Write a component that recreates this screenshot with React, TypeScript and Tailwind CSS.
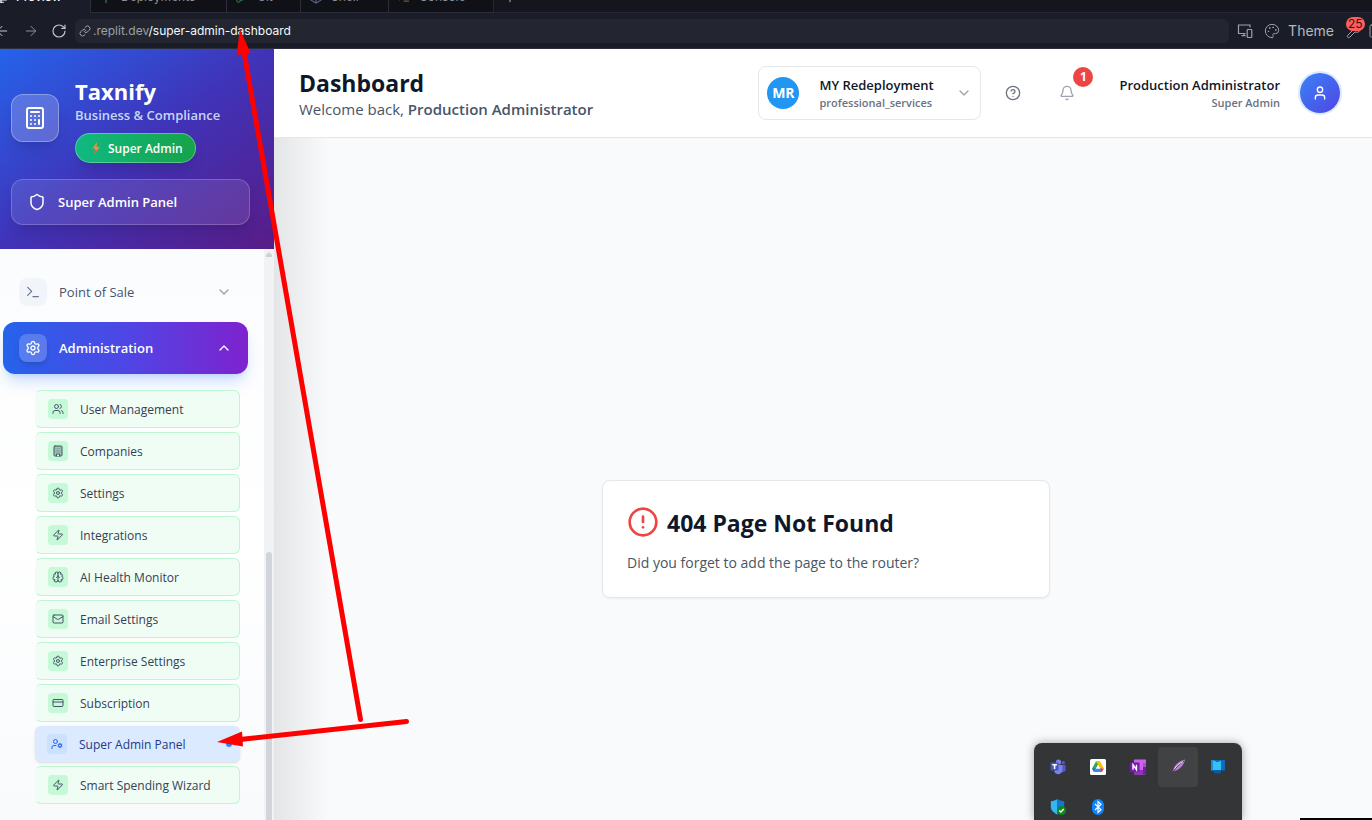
import React from "react";
import {
  ArrowLeft, ArrowRight, RotateCw, Link as LinkIcon, Palette, Wrench, Calculator, Shield,
  Terminal, Settings, ChevronUp, ChevronDown, Users, Zap, Brain, Mail, CreditCard, UserCog,
  CircleHelp, Bell, User, CircleAlert, Monitor, Plus, GitBranch, Box, PanelRight,
} from "lucide-react";

type IconType = React.ComponentType<{ className?: string; strokeWidth?: number }>;

const ui = "font-['Open_Sans','Noto_Sans',sans-serif]";

function Sprout({ className }: { className?: string }) {
  return (
    <svg viewBox="0 0 14 14" className={className} fill="none" stroke="currentColor" strokeWidth="1.5">
      <path d="M7 13 V4 M7 9 H3 V5 M7 8 H11 V5" />
    </svg>
  );
}

function Devices({ className }: { className?: string }) {
  return (
    <svg viewBox="0 0 16 16" className={className} fill="none" stroke="currentColor" strokeWidth="1.2">
      <path d="M13 4.5 V2 H1.5 V10.5 H8.5 M4.5 12.7 H8.5 M7 10.5 V12.7" />
      <rect x="10.2" y="6.5" width="4.6" height="8" rx="0.8" />
    </svg>
  );
}

function Office({ className }: { className?: string }) {
  return (
    <svg viewBox="0 0 24 24" className={className} stroke="currentColor" strokeWidth="2" strokeLinecap="round">
      <rect x="4" y="2" width="16" height="20" rx="2" fill="#9cc4b2" />
      <path d="M9 22 V18 H15 V22" fill="#dcfce7" />
      <path d="M8 7 H16 M8 11 H16 M8 14 H16" strokeOpacity="0.25" />
    </svg>
  );
}

const tabs: { label: string; width: string; icon: IconType; tint: string }[] = [
  { label: "Deployments", width: "w-[136px]", icon: Sprout, tint: "text-[#2f6b45]" },
  { label: "Git", width: "w-[74px]", icon: GitBranch, tint: "text-[#2f6b45]" },
  { label: "Shell", width: "w-[88px]", icon: Box, tint: "text-[#56677f]" },
  { label: "Console", width: "w-[105px]", icon: Terminal, tint: "text-[#6b5a3a]" },
];

function BrowserChrome() {
  return (
    <div className="shrink-0 bg-[#1a1d27] font-['Inter',sans-serif]">
      <div className="flex h-[13px] items-end overflow-hidden bg-[#14151d] text-xs leading-5">
        <button className="flex h-7 w-[90px] shrink-0 items-center gap-2 overflow-hidden bg-[#1a1d27] pb-1 font-medium text-[#f5f9fc]">
          <Monitor className="-ml-1.5 size-3.5 shrink-0" />
          Preview
        </button>
        {tabs.map(({ label, width, icon: Icon, tint }) => (
          <button
            key={label}
            className={`flex h-7 shrink-0 items-center gap-2 border-b border-l border-[#2b2e3a] bg-[#101116] pb-1 pl-2 text-[#8a8f98] ${width}`}
          >
            <Icon className={`size-3.5 ${tint}`} />
            {label}
          </button>
        ))}
        <div className="flex h-7 grow items-center border-b border-l border-[#232634] pb-1 pl-2 text-[#8a8f98]">
          <Plus className="size-4" />
        </div>
      </div>
      <div className="flex h-9 items-center overflow-hidden border-b border-[#2b2e3c] text-[#c2c8cc]">
        <button aria-label="Back" className="-ml-1.5 w-[29px] shrink-0"><ArrowLeft className="size-4" strokeWidth={1.5} /></button>
        <button aria-label="Forward" className="w-7 shrink-0 text-[#8a8f98]"><ArrowRight className="size-4" strokeWidth={1.5} /></button>
        <button aria-label="Reload" className="w-6 shrink-0"><RotateCw className="size-4" strokeWidth={1.75} /></button>
        <div className="flex h-6 grow items-center gap-0.5 rounded-md bg-[#232630] pl-1 text-xs text-[#9da2a6]">
          <LinkIcon className="size-3" strokeWidth={2} />
          <span>.replit.dev<span className="text-[#f5f9fc]">/super-admin-dashboard</span></span>
        </div>
        <div className="flex shrink-0 items-center pl-2 text-[#9da2a6]">
          <Devices className="mr-[11px] size-4" />
          <Palette className="mr-2 size-4" strokeWidth={1.5} />
          <span className="mr-3 text-sm text-[#b4b9be]">Theme</span>
          <div className="relative">
            <Wrench className="size-4" strokeWidth={1.5} />
            <span className="absolute -top-1.5 left-0 rounded-full bg-[#ff5f5c] px-0.5 text-xs leading-[14px] text-[#3a1010]">25</span>
          </div>
          <PanelRight className="-mr-3 ml-1.5 size-4" strokeWidth={1.5} />
        </div>
      </div>
    </div>
  );
}

function Bolt() {
  return (
    <svg viewBox="0 0 8 12" className="h-3 w-2">
      <path d="M5 0 L0.5 6.6 H3 L2.6 12 L7.6 4.9 H4.6 Z" fill="#fb8b3c" />
      <path d="M2.9 8 L2.6 12 L5.4 8 Z" fill="#f4564a" />
    </svg>
  );
}

function SidebarHeader() {
  return (
    <div className="h-[200px] shrink-0 bg-linear-to-br/srgb from-[#2563eb] via-[#4033b8] to-[#581c87] pt-7 pr-6 pl-[11px]">
      <div className="flex items-center gap-4">
        <div className="mb-1 flex size-12 shrink-0 items-center justify-center rounded-xl border border-white/30 bg-white/20 shadow-lg">
          <Calculator className="size-6 text-white" />
        </div>
        <div className="flex flex-col items-start">
          <h1 className="text-[22px] leading-7 font-bold text-white">Taxnify</h1>
          <p className="text-[13px] leading-5 font-semibold text-[#dbeafe]/90">Business &amp; Compliance</p>
          <span className="mt-2 flex h-[30px] items-center gap-2 rounded-full border border-white/30 bg-linear-to-r/srgb from-[#10b981] to-[#16a34a] pr-3 pl-4 text-xs font-semibold text-white shadow-lg">
            <Bolt />
            <span className="pt-0.5">Super Admin</span>
          </span>
        </div>
      </div>
      <a
        href="#admin"
        className="mt-4 flex h-[46px] items-center gap-3 rounded-xl border border-white/20 bg-white/10 px-4 text-[13px] font-semibold text-white shadow-lg"
      >
        <Shield className="size-[18px]" />
        <span className="pt-0.5">Super Admin Panel</span>
      </a>
    </div>
  );
}

const items: { label: string; icon: IconType; active?: boolean }[] = [
  { label: "User Management", icon: Users },
  { label: "Companies", icon: Office },
  { label: "Settings", icon: Settings },
  { label: "Integrations", icon: Zap },
  { label: "AI Health Monitor", icon: Brain },
  { label: "Email Settings", icon: Mail },
  { label: "Enterprise Settings", icon: Settings },
  { label: "Subscription", icon: CreditCard },
  { label: "Super Admin Panel", icon: UserCog, active: true },
  { label: "Smart Spending Wizard", icon: Zap },
];

function Sidebar() {
  return (
    <aside className="flex w-[274px] shrink-0 flex-col bg-white">
      <SidebarHeader />
      <div className="flex min-h-0 grow">
        <nav className="min-w-0 grow overflow-hidden bg-linear-to-b from-[#fbfcfe] via-white to-[#f8fafc] pt-[17px] pr-4 pl-[3px]">
          <button className="flex h-[52px] w-full items-center rounded-xl px-4 text-[13px] font-medium text-[#475569]">
            <span className="flex size-7 items-center justify-center rounded-lg bg-[#f1f5f9] text-[#64748b]">
              <Terminal className="size-4" strokeWidth={1.75} />
            </span>
            <span className="ml-3 grow pt-0.5 text-left">Point of Sale</span>
            <ChevronDown className="size-4 text-[#94a3b8]" />
          </button>
          <button className="mt-1 flex h-[52px] w-full items-center rounded-xl bg-linear-to-r/srgb from-[#2563eb] via-[#4f46e5] to-[#7e22ce] px-4 text-[13px] font-semibold text-white shadow-lg shadow-[#3b82f6]/25">
            <span className="flex size-7 items-center justify-center rounded-lg bg-white/20 shadow-md">
              <Settings className="size-4" />
            </span>
            <span className="ml-3 grow pt-0.5 text-left">Administration</span>
            <ChevronUp className="size-4" />
          </button>
          <ul className="mt-4 mr-2 ml-8 flex flex-col gap-1 text-xs font-medium">
            {items.map(({ label, icon: Icon, active }) => (
              <li key={label}>
                <a
                  href="#page"
                  className={
                    active
                      ? "flex h-9 items-center rounded-md bg-[#dbeafe] px-3 text-[#1e3a8a] shadow-sm"
                      : "flex h-[38px] items-center rounded-md border border-[#bbf7d0] border-l-transparent bg-[#f0fdf4] px-3 text-[#334155]"
                  }
                >
                  <span
                    className={
                      active
                        ? "flex size-5 items-center justify-center rounded bg-[#bfdbfe]/60 text-[#2563eb]"
                        : "flex size-5 items-center justify-center rounded bg-[#bbf7d0]/80 text-[#475569]"
                    }
                  >
                    <Icon className="size-3" strokeWidth={2} />
                  </span>
                  <span className="ml-3 grow pt-0.5">{label}</span>
                  {active && <span className="-mr-1 size-1.5 rounded-full bg-[#3b82f6]" />}
                </a>
              </li>
            ))}
          </ul>
        </nav>
        <div className="flex w-2.5 shrink-0 flex-col items-center bg-[#f1f2f4]">
          <svg viewBox="0 0 6 5" className="mt-[3px] h-[5px] w-1.5 shrink-0"><path d="M3 0 L6 3 V5 H0 V3 Z" fill="#cfd1d8" /></svg>
          <div className="mt-[295px] w-1.5 grow rounded-t-full bg-[#d1d5db]" />
        </div>
      </div>
    </aside>
  );
}

function Header() {
  return (
    <header className="flex h-[89px] shrink-0 items-center border-b border-[#e5e7eb] bg-white pr-8 pl-[25px] shadow-xs">
      <div className="grow">
        <h2 className="text-[23px] leading-8 font-bold text-[#0f172a]">Dashboard</h2>
        <p className="text-[15px] leading-5 text-[#475569]">
          Welcome back, <span className="font-semibold">Production Administrator</span>
        </p>
      </div>
      <button className="flex h-[54px] w-[223px] items-center rounded-lg border border-[#e5e7eb] bg-white px-2 text-left">
        <span className="flex size-8 shrink-0 items-center justify-center rounded-full bg-[#2196f3] text-sm font-bold text-white">MR</span>
        <span className="ml-5 grow">
          <span className="block text-[13px] leading-5 font-semibold text-[#0f172a]">MY Redeployment</span>
          <span className="block text-[11px] leading-4 font-semibold text-[#6b7280]">professional_services</span>
        </span>
        <ChevronDown className="size-4 text-[#9ca3af]" />
      </button>
      <button aria-label="Help" className="ml-6 text-[#6b7280]"><CircleHelp className="size-4" /></button>
      <button aria-label="Notifications" className="relative ml-[38px] text-[#9ca3af]">
        <Bell className="size-4" />
        <span className="absolute -top-[18px] left-[14px] flex size-5 items-center justify-center rounded-full bg-[#ef4444] text-xs font-bold text-white">1</span>
      </button>
      <div className="ml-11 text-right">
        <p className="text-[13px] leading-5 font-semibold text-[#0f172a]">Production Administrator</p>
        <p className="text-[11px] leading-4 font-semibold text-[#6b7280]">Super Admin</p>
      </div>
      <button aria-label="Account" className="ml-5 flex size-10 items-center justify-center rounded-full bg-linear-to-br/srgb from-[#3b82f6] to-[#4f46e5] text-white ring-2 ring-[#dbeafe]">
        <User className="size-4" />
      </button>
    </header>
  );
}

function NotFound() {
  return (
    <main className="flex grow items-center justify-center bg-linear-to-r/srgb from-[#e3e5e7] via-[#f9fafc] via-5% to-[#f9fafc] pt-[120px] pl-1.5">
      <section className="w-full max-w-[448px] rounded-lg border border-[#e5e7eb] bg-white p-6 shadow-xs">
        <div className="flex items-center gap-2">
          <CircleAlert className="size-8 text-[#ef4444]" />
          <h2 className="pt-0.5 text-[23px] leading-8 font-bold text-[#0f172a]">404 Page Not Found</h2>
        </div>
        <p className="mt-3.5 text-sm leading-5 text-[#4b5563]">Did you forget to add the page to the router?</p>
      </section>
    </main>
  );
}

const cell = "flex size-10 items-center justify-center rounded";

function Tray() {
  return (
    <div className="absolute right-[130px] bottom-0 flex h-[77px] w-[208px] flex-wrap content-start overflow-hidden rounded-t-lg bg-[#343537] p-1 shadow-[0_0_10px_rgba(0,0,0,0.35)]">
      <span className={cell}>
        <svg viewBox="0 0 16 16" className="size-4">
          <circle cx="8.5" cy="3" r="2.6" fill="#7b83eb" />
          <circle cx="13.3" cy="3.8" r="1.8" fill="#5059c9" />
          <path d="M10.5 6 H15.6 V10.6 a2.8 2.8 0 0 1 -4 2.4 Z" fill="#5059c9" />
          <path d="M5 6 H12.4 V11 a4.3 4.3 0 0 1 -8 2 Z" fill="#7b83eb" />
          <rect x="0.5" y="3.6" width="8" height="8" rx="0.8" fill="#4b53bc" />
          <path d="M2.3 5.7 H6.9 M4.6 5.7 V10" stroke="#fff" strokeWidth="1.5" />
        </svg>
      </span>
      <span className={cell}>
        <svg viewBox="0 0 16 16" className="size-4">
          <rect width="16" height="16" rx="1.5" fill="#fff" />
          <path d="M6 2.5 H10 L6 9.5 L4 13 L2 9.6 Z" fill="#34a853" />
          <path d="M6.2 2.5 H10 L14 9.5 H10 Z" fill="#fbbc04" />
          <path d="M2 9.6 H6 L4 13 Z" fill="#1a73e8" />
          <path d="M5.9 9.5 H12 L12 13 H4 Z" fill="#4285f4" />
          <path d="M10 9.5 H14 L12 13 Z" fill="#ea4335" />
          <path d="M8 6.1 L9.9 9.5 H6 Z" fill="#fff" />
        </svg>
      </span>
      <span className={cell}>
        <svg viewBox="0 0 16 16" className="size-4">
          <rect x="4" y="0.5" width="12" height="15" rx="0.8" fill="#ca64ea" />
          <rect x="13" y="4" width="3" height="4" fill="#ae4bd5" />
          <rect x="13" y="8" width="3" height="7.5" fill="#7719aa" />
          <rect x="4" y="11" width="9" height="4.5" fill="#9332bf" />
          <rect x="0" y="3.5" width="9.5" height="9.5" rx="0.8" fill="#7719aa" />
          <path d="M3 10.7 V5.8 L6.5 10.7 V5.8" stroke="#fff" strokeWidth="1.4" fill="none" />
        </svg>
      </span>
      <span className={`${cell} bg-[#414244]`}>
        <svg viewBox="0 0 16 16" className="size-4">
          <path d="M15 0.5 C9 2 4.5 5.5 2.5 12.5 C8 11.5 13.5 8 15 0.5 Z" fill="#b583d0" />
          <path d="M14 2 C9 5 4.5 10 1 15.5" stroke="#5e2a7c" strokeWidth="1" fill="none" />
          <path d="M13 2.6 C9 4.4 6 7 4.5 10" stroke="#e9d4f3" strokeWidth="1" fill="none" />
        </svg>
      </span>
      <span className={cell}>
        <svg viewBox="0 0 16 16" className="size-4">
          <rect x="1" y="1" width="14" height="10.5" rx="0.8" fill="#0f6cbd" />
          <rect x="1" y="1" width="3.5" height="10.5" fill="#1b8fdc" />
          <path d="M3 2 H5.5 L6 3 H9 L9.5 2 H11 V11 H3 Z" fill="#35c2f0" />
          <path d="M4 11 H11 V13.5 a1 1 0 0 1 -1 1 H5 a1 1 0 0 1 -1 -1 Z" fill="#0b5aa5" />
        </svg>
      </span>
      <span className={cell}>
        <svg viewBox="0 0 16 16" className="size-4">
          <path d="M7.5 0 C5.5 1.6 3 2 0.8 2.2 V7.5 C0.8 11.5 4 14 7.5 15.5 Z" fill="#35b6f2" />
          <path d="M7.5 0 C9.5 1.6 12 2 14.2 2.2 V7.5 C14.2 11.5 11 14 7.5 15.5 Z" fill="#1277cf" />
          <circle cx="11.5" cy="11.5" r="4.5" fill="#0f8a1f" />
          <path d="M9.3 11.6 L10.9 13.1 L13.7 10" stroke="#fff" strokeWidth="1.4" fill="none" />
        </svg>
      </span>
      <span className={cell}>
        <svg viewBox="0 0 16 16" className="size-4">
          <rect x="2" y="0" width="12" height="16" rx="6" fill="#0a84ff" />
          <path d="M5 5 L11 10.8 L8 13.4 V2.6 L11 5.2 L5 11" stroke="#fff" strokeWidth="1.2" fill="none" />
        </svg>
      </span>
    </div>
  );
}

function Arrows() {
  return (
    <svg viewBox="0 0 420 760" className="pointer-events-none absolute top-0 left-0 h-[760px] w-[420px]" fill="#fe0000" stroke="#fe0000">
      <path d="M360.5 719.5 L244 52" strokeWidth="5" strokeLinecap="round" />
      <path d="M240 29 L250.5 53 L236.5 55 Z" stroke="none" />
      <path d="M406.5 721.5 L240 739.5" strokeWidth="5" strokeLinecap="round" />
      <path d="M217 742 L242 731.5 L243 746.5 Z" stroke="none" />
    </svg>
  );
}

export default function App() {
  return (
    <div className={`relative flex h-screen flex-col overflow-hidden ${ui}`}>
      <BrowserChrome />
      <div className="flex min-h-0 grow">
        <Sidebar />
        <div className="flex min-w-0 grow flex-col">
          <Header />
          <NotFound />
        </div>
      </div>
      <Arrows />
      <Tray />
      <div className="absolute right-0 bottom-0 h-0.5 w-[72px] bg-black" />
    </div>
  );
}
